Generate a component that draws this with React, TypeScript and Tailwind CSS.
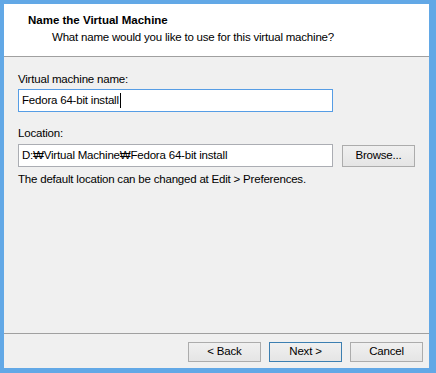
export default function App() {
  const font = { fontFamily: '"Liberation Sans", Arial, sans-serif' };

  return (
    <div
      className="w-[436px] h-[373px] bg-[#62a8e6] pt-[4px] pl-[4px] pr-[7px] pb-[5px] text-[11.5px] tracking-[-0.2px] text-black"
      style={font}
    >
      <div className="flex h-full w-full flex-col bg-[#f0f0f0]">
        {/* header */}
        <div className="h-[53px] border-b border-[#a0a0a0] bg-white pl-[24px] pt-[9px]">
          <p className="font-bold leading-[15px] tracking-normal">Name the Virtual Machine</p>
          <p className="mt-[2px] pl-[24px] leading-[15px]">
            What name would you like to use for this virtual machine?
          </p>
        </div>

        {/* body */}
        <div className="flex-1 pl-[14px] pt-[15px]">
          <label className="block leading-[15px]">Virtual machine name:</label>
          <div className="mt-[2px] flex h-[23px] w-[315px] items-center border border-[#569de5] bg-white pl-[3px]">
            <span>Fedora 64-bit install</span>
            <span className="ml-[1px] h-[15px] w-[1px] bg-black" />
          </div>

          <label className="mt-[14px] block leading-[15px]">Location:</label>
          <div className="mt-[3px] flex items-center gap-[9px]">
            <div className="flex h-[23px] w-[315px] items-center border border-[#abadb3] bg-white pl-[3px]">
              D:₩Virtual Machine₩Fedora 64-bit install
            </div>
            <button className="h-[22px] w-[73px] border border-[#acacac] bg-gradient-to-b from-[#f0f0f0] to-[#e5e5e5] leading-none">
              Browse...
            </button>
          </div>

          <p className="mt-[5px] leading-[15px]">
            The default location can be changed at Edit &gt; Preferences.
          </p>
        </div>

        {/* footer */}
        <div className="flex h-[35px] justify-end gap-[8px] border-t border-[#a0a0a0] pr-[6px] pt-[8px]">
          <button className="h-[20px] w-[73px] border border-[#acacac] bg-gradient-to-b from-[#f0f0f0] to-[#e5e5e5] leading-none">
            &lt; Back
          </button>
          <button className="h-[20px] w-[73px] border border-[#3c7fb1] bg-gradient-to-b from-[#f0f0f0] to-[#e5e5e5] leading-none">
            Next &gt;
          </button>
          <button className="h-[20px] w-[73px] border border-[#acacac] bg-gradient-to-b from-[#f0f0f0] to-[#e5e5e5] leading-none">
            Cancel
          </button>
        </div>
      </div>
    </div>
  );
}
